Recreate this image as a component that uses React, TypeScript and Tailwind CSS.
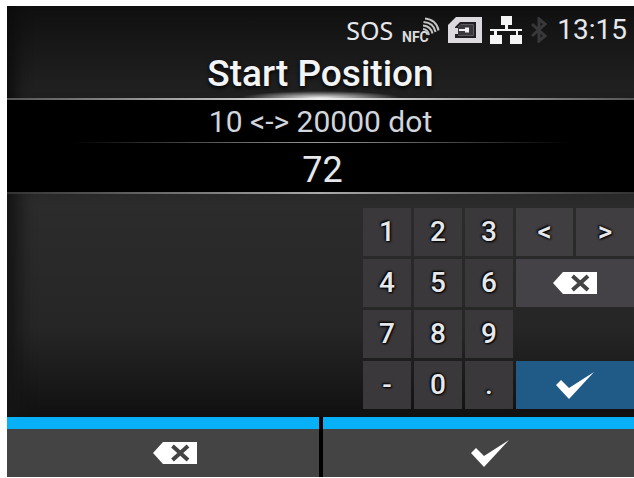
import React, { useState } from 'react';

const NfcIcon = () => (
  <svg width="39" height="34" viewBox="0 -4 39 34" fill="none" role="img" aria-label="NFC">
    <text x="1" y="25" fill="#dcdcdc" fontFamily="Roboto, sans-serif" fontWeight="700" fontSize="14">NFC</text>
    <g stroke="#c4c4c4" strokeWidth="2">
      <path d="M22 12c3 .5 5.500 2.500 6 6" />
      <path d="M22 8.500c5 .5 8.500 3.500 9.500 8" />
      <path d="M22.500 5c6.500 .5 11 4 12 10" />
      <path d="M24 1.500c7 .5 12.500 5 13.500 12" />
    </g>
  </svg>
);

const CardIcon = () => (
  <svg width="34" height="26" viewBox="0 0 34 26" role="img" aria-label="Memory card">
    <path d="M8 0h26v26H0V8z" fill="#dcdadf" />
    <path d="M12 5h16v16H7v-4h3v1.500h15.500v-11H13L10 10v1H7v-1z" fill="#222024" />
    <path d="M10 10l3-2.500h12.500v11H10z" fill="#3a383d" />
    <path d="M11 12h6v-1.500h4v5h-4V14h-6z" fill="#f0eef2" />
  </svg>
);

const NetworkIcon = () => (
  <svg width="33" height="28" viewBox="0 0 33 28" fill="#f4f4f4" role="img" aria-label="Network">
    <path d="M11 0h11v9h-4v4h14v2h-4v4h4v9H20v-9h6v-4H7v4h5v9H0v-9h4v-4H0v-2h15V9h-4z" />
  </svg>
);

const BluetoothIcon = () => (
  <svg width="16" height="26" viewBox="0 0 16 26" fill="none" stroke="#38383a" strokeWidth="3" role="img" aria-label="Bluetooth off">
    <path d="M1 7l13 12-6 5V2l6 5L1 19" />
  </svg>
);

const DeleteIcon = () => (
  <svg width="44" height="22" viewBox="0 0 44 22" aria-hidden="true">
    <path d="M0 11L10 0h34v22H10z" fill="#fff" />
    <path d="M19.500 4L35 18M35 4L19.500 18" stroke="#444" strokeWidth="4" />
  </svg>
);

const CheckIcon = () => (
  <svg width="38" height="27" viewBox="0 0 38 27" aria-hidden="true">
    <path d="M0 13l5-5 8 8L38 0 13 27z" fill="#fff" />
  </svg>
);

const keyText = 'text-[28px] leading-8 font-medium text-gray-200 [text-shadow:0_0_3px_#000,1px_1px_2px_#000,-1px_-1px_2px_#000]';
const footerButton = 'h-15 pl-6 flex items-center justify-center bg-[#444] border-t-12 border-[#08b1f7]';

const digits = [
  ['1', '2', '3'],
  ['4', '5', '6'],
  ['7', '8', '9'],
  ['-', '0', '.'],
];

const App = () => {
  const [value, setValue] = useState('72');

  const append = (char: string) => setValue(value + char);
  const backspace = () => setValue(value.slice(0, -1));

  return (
    <div className="min-h-screen bg-white pt-[6px] pl-[7px] pb-px flex flex-col font-[Roboto,sans-serif]">
      <main className="flex-1 flex flex-col bg-black">
        <header className="bg-linear-to-b from-[#101011] to-[#222] shadow-[inset_16px_0_16px_-8px_#0c0c0c]">
          <div className="h-11 pt-1 pr-[7px] flex items-center justify-end text-gray-200">
            <span className="font-['Noto_Sans',sans-serif] text-[25px] leading-9 mr-2">SOS</span>
            <div className="flex items-center gap-2">
              <NfcIcon />
              <CardIcon />
              <NetworkIcon />
              <BluetoothIcon />
            </div>
            <span className="text-[28px] leading-9 ml-[10px]">13:15</span>
          </div>
          <h1 className="h-12 text-center text-[37px] leading-12 font-medium text-gray-100 [text-shadow:0_2px_4px_#000] bg-[radial-gradient(ellipse_80px_7px_at_50%_100%,#eee,transparent)]">
            Start Position
          </h1>
        </header>

        <div className="h-[2px] bg-linear-to-r from-[#555] via-[#eee] to-[#555]" />
        <section className="bg-black text-center text-gray-300">
          <label htmlFor="position" className="block h-[42px] text-[30px] leading-[44px]">
            10 &lt;-&gt; 20000 dot
          </label>
          <div className="mx-16 h-px bg-linear-to-r from-transparent via-[#999] to-transparent" />
          <input
            id="position"
            type="text"
            inputMode="numeric"
            value={value}
            onChange={(e) => setValue(e.target.value)}
            className="block w-full h-[49px] pt-1 pl-1 bg-transparent text-center text-4xl text-gray-200 outline-none"
          />
        </section>
        <div className="h-[2px] bg-linear-to-r from-[#333] via-[#aaa] to-[#333]" />

        <section className="flex-1 pt-[14px] pb-2 flex justify-end bg-linear-to-b from-[#2c2c2c] via-[#262626] via-60% to-[#121112] shadow-[inset_20px_0_16px_-8px_#151515]">
          <div className="grid grid-cols-[48px_48px_48px_57px_58px] auto-rows-[48px] gap-[3px] content-start">
            {digits.map((row, i) => (
              <React.Fragment key={i}>
                {row.map((char) => (
                  <button key={char} onClick={() => append(char)} className={`bg-[#3a383a] ${keyText}`}>
                    {char}
                  </button>
                ))}
                {i === 0 && (
                  <>
                    <button aria-label="Move left" className={`bg-[#403e41] ${keyText}`}>&lt;</button>
                    <button aria-label="Move right" className={`bg-[#403e41] ${keyText}`}>&gt;</button>
                  </>
                )}
                {i === 1 && (
                  <button aria-label="Delete" onClick={backspace} className="col-span-2 flex items-center justify-center bg-[#444246]">
                    <DeleteIcon />
                  </button>
                )}
                {i === 2 && <div className="col-span-2" />}
                {i === 3 && (
                  <button aria-label="Confirm" className="col-span-2 flex items-center justify-center bg-[#205a87]">
                    <CheckIcon />
                  </button>
                )}
              </React.Fragment>
            ))}
          </div>
        </section>

        <footer className="grid grid-cols-2 gap-1 bg-black">
          <button aria-label="Clear" onClick={backspace} className={footerButton}>
            <DeleteIcon />
          </button>
          <button aria-label="Accept" className={footerButton}>
            <CheckIcon />
          </button>
        </footer>
      </main>
    </div>
  );
};

export default App;
